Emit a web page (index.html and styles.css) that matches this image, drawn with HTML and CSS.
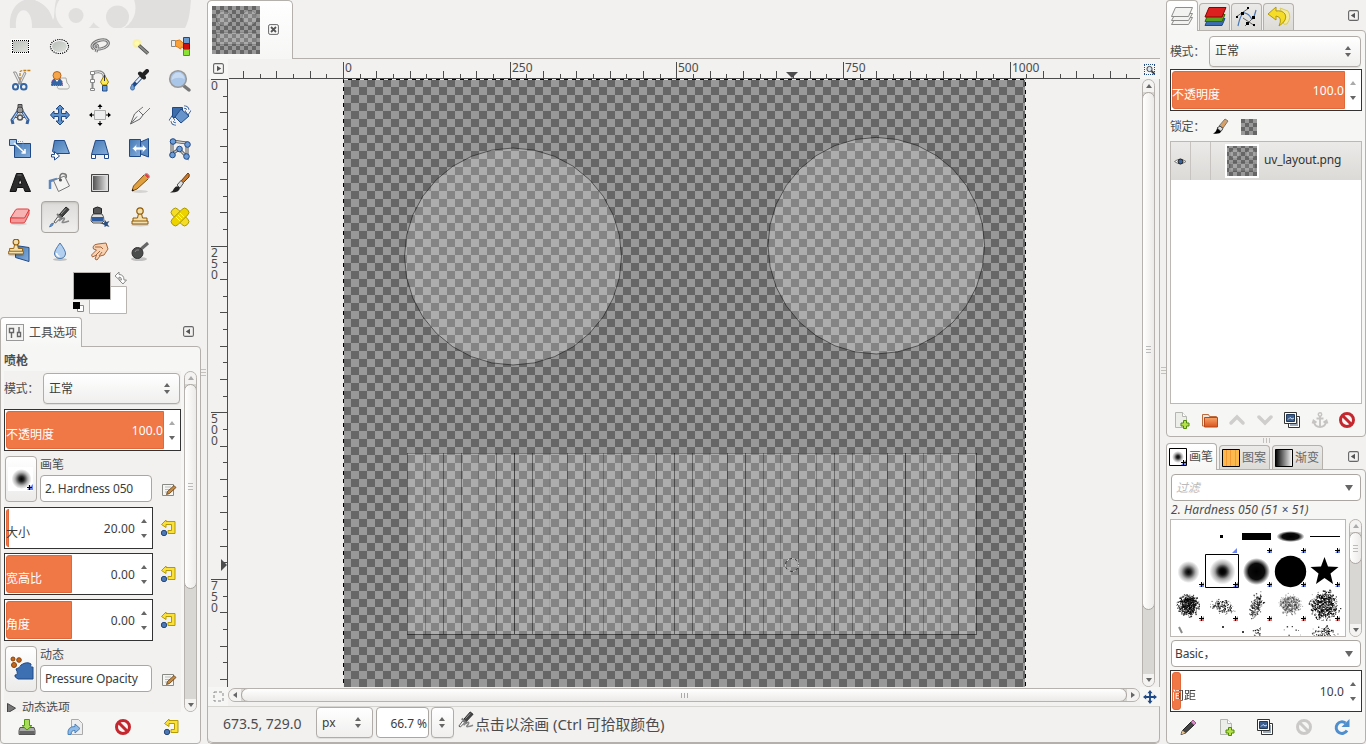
FILE: index.html
```
<!DOCTYPE html>
<html lang="zh-CN">
<head>
<meta charset="utf-8">
<title>GIMP</title>
<link rel="stylesheet" href="styles.css">
</head>
<body>
<svg class="defs" width="0" height="0">
<defs>
<pattern id="chk" x="343" y="79" width="16" height="16" patternUnits="userSpaceOnUse"><path fill="#666" d="M0 0h16v16H0z"/><path fill="#999" d="M0 0h8v8H0zM8 8h8v8H8z"/></pattern>
<pattern id="chk4" width="8" height="8" patternUnits="userSpaceOnUse"><path fill="#999" d="M0 0h8v8H0z"/><path fill="#666" d="M0 0h4v4H0zM4 4h4v4H4z"/></pattern>
<linearGradient id="gb" x1="0" y1="0" x2="1" y2="1"><stop offset="0" stop-color="#4478b4"/><stop offset="1" stop-color="#85aedb"/></linearGradient>
<linearGradient id="gg" x1="0" y1="0" x2="1" y2="1"><stop offset="0" stop-color="#b9beb7"/><stop offset="1" stop-color="#dfe1dd"/></linearGradient>
<linearGradient id="bw"><stop offset="0" stop-color="#444"/><stop offset="1" stop-color="#eee"/></linearGradient>
<linearGradient id="kw"><stop offset="0"/><stop offset="1" stop-color="#fff"/></linearGradient>
<linearGradient id="go" x1="0" y1="0" x2="0" y2="1"><stop offset="0" stop-color="#f7a46a"/><stop offset="1" stop-color="#d9531c"/></linearGradient>
<radialGradient id="soft"><stop offset="0"/><stop offset=".25" stop-opacity=".85"/><stop offset=".65" stop-opacity=".3"/><stop offset="1" stop-opacity="0"/></radialGradient>
<radialGradient id="mid"><stop offset="0"/><stop offset=".6" stop-opacity=".95"/><stop offset=".8" stop-opacity=".5"/><stop offset="1" stop-opacity="0"/></radialGradient>
<symbol id="reset" viewBox="0 0 18 18"><path d="M7 2.500h9v12h-7v-3h3.500v-6H7v3L2.500 5.500 7 1z" fill="#f9e03c" stroke="#b59a00"/><circle cx="5" cy="14" r="2.700" fill="#4b78b5" stroke="#27487a"/></symbol>
<symbol id="edit" viewBox="0 0 16 16"><path d="M1.500 2.500h11v11h-11z" fill="#f5f5f3" stroke="#888a85"/><path d="M4 5h6M4 7.500h5M4 10h3" stroke="#bbb"/><path d="M5.500 12.500l1-3 6.500-6 2 2-6.500 6z" fill="#c98a3c" stroke="#5a3b16" stroke-width=".8"/></symbol>
<symbol id="no" viewBox="0 0 18 18"><circle cx="9" cy="9" r="6.500" fill="none" stroke="currentColor" stroke-width="3"/><path d="M4.500 4.500l9 9" stroke="currentColor" stroke-width="3"/></symbol>
<symbol id="menu" viewBox="0 0 11 11"><rect x=".6" y=".6" width="9.800" height="9.800" rx="1.500" fill="none" stroke="#666" stroke-width="1.100"/><path d="M7 2.800v5.400L2.800 5.500z" fill="#555"/></symbol>
<symbol id="newdoc" viewBox="0 0 18 18"><path d="M2.500 1.500h7l4 4v11h-11z" fill="#eceeea" stroke="#b4b6b2"/><path d="M9.500 1.500v4h4" fill="#fff" stroke="#b4b6b2"/><path d="M10.500 9.500h3v2.500H16v3h-2.500v2.500h-3V15H8v-3h2.500z" fill="#b6e04c" stroke="#4e8a06"/></symbol>
<symbol id="dup" viewBox="0 0 18 18"><path d="M5.500 5.500h11v11h-11z" fill="#fff" stroke="#333"/><path d="M7 7h8v8H7z" fill="#9aa8b8"/><path d="M1.500 1.500h12v11h-12z" fill="#fff" stroke="#333"/><path d="M3.500 3.500h8v7h-8z" fill="#3b5f8f" stroke="#223a5a"/><path d="M5 8.500l2-2 2 1.500 2-1" stroke="#dce6f2" fill="none"/></symbol>
<symbol id="stamp" viewBox="0 0 24 24"><ellipse cx="12" cy="20" rx="9" ry="1.500" fill="#000" opacity=".15"/><path d="M10.500 8.500h3l1 4.500h4.500v3h1v3H4v-3h1v-3h4.500z" fill="#f3dfae" stroke="#8f5902"/><circle cx="12" cy="6" r="3.200" fill="#f3dfae" stroke="#8f5902" stroke-width="1.200"/><path d="M5 16h14" stroke="#8f5902"/></symbol>
<g id="airg"><path d="M11 16c5-5 7-3 4 0-3 3 3 1 6 0" fill="none" stroke="#888" stroke-width="1.600"/><path d="M6 17l4-5.500 2 2-4.500 4.500z" fill="#f2f2f2" stroke="#555"/><path d="M11 10l7-8 3 2.500-7.500 8z" fill="#444" stroke="#222"/><path d="M9 9l5.500 5" stroke="#777" stroke-width="2"/><path d="M13 9l5-5.500" stroke="#999"/></g>
</defs>
</svg>
<div class="app">
<aside class="left">
  <svg class="wilber" width="200" height="30"><path d="M10 28C8 6 23-4 35 0c11 4 15 10 18 20 2-5 1-12 3-20h135c-1 12-2 21-6 28z" fill="#e0dfde"/><path d="M16 28c-2-24 17-23 16 0zM35 0h19v19C49 8 43 3 35 0z" fill="#f2f1f0"/><circle cx="76" cy="12" r="20.500" fill="#f2f1f0"/><circle cx="76" cy="15.500" r="7.500" fill="#e0dfde"/><circle cx="112" cy="8" r="23.500" fill="#f2f1f0"/><circle cx="117.500" cy="17" r="11.500" fill="#e0dfde"/><path d="M0 28h200v3H0z" fill="#f2f1f0"/></svg>
  <div class="tools">
    <i><svg><path d="M3 4h19v15H3z" fill="#fff"/><path d="M5 6h15v11H5z" fill="url(#gg)"/><path d="M4 5.500h17M4 17.500h17M4.500 6v11M20.500 6v11" fill="none" stroke="#000" stroke-dasharray="1 1"/></svg></i>
    <i><svg><ellipse cx="11.500" cy="11.500" rx="9.500" ry="7.500" fill="#fff"/><ellipse cx="11.500" cy="11.500" rx="7.500" ry="5.500" fill="url(#gg)"/><ellipse cx="11.500" cy="11.500" rx="9" ry="7" fill="none" stroke="#000" stroke-width="1.200" stroke-dasharray="1.200 1"/></svg></i>
    <i><svg><path d="M6 14C1 11 6 6 13 5c7-1 9 3 6 6-3 3-10 4-12 2-2-2 0-4 2-3s0 4-1 7" fill="none" stroke="#777" stroke-width="3"/><path d="M6 14C1 11 6 6 13 5c7-1 9 3 6 6-3 3-10 4-12 2-2-2 0-4 2-3s0 4-1 7" fill="none" stroke="#ddd"/></svg></i>
    <i><svg><circle cx="9" cy="8.500" r="4.500" fill="#fff27a" opacity=".6"/><circle cx="9" cy="8.500" r="2.300" fill="#fffba8"/><path d="M11 10.500l9 8" stroke="#444" stroke-width="3.500"/><path d="M11 10.500l9 8" stroke="#8b8f87" stroke-width="1.800"/></svg></i>
    <i><svg><path d="M3.500 5.500h4v6h-4z" fill="#eee" stroke="#888"/><path d="M7.500 6l4-1 5 4v4l-3-1-1 2-3-2-2-1z" fill="#f9a13a" stroke="#e07a10"/><path d="M15.500 2.500h6v6h-6z" fill="#6a9bd0" stroke="#204a87"/><path d="M15.500 8.500h6v6h-6z" fill="#cc1010" stroke="#900"/><path d="M15.500 14.500h6v6h-6z" fill="#8ae234" stroke="#4e9a06"/></svg></i>

    <i><svg><path d="M12 11V3q0-1.500 3-1.500h8" fill="none" stroke="#c17d11" stroke-width="1.300" stroke-dasharray="3 1"/><path d="M5.500 3l6 12h2L8 3zM16.500 3l-6 12h2L18 4z" fill="#eee" stroke="#888" stroke-width=".9"/><rect x="5" y="15" width="5" height="5.500" rx="2.500" fill="none" stroke="#3465a4" stroke-width="2"/><rect x="13" y="15" width="5.500" height="5.500" rx="2.500" fill="none" stroke="#3465a4" stroke-width="2"/></svg></i>
    <i><svg><path d="M12 9h6l1 5c3 2 3 6 0 6h-7c-4 0-3-4 0-4z" fill="#f3f3f1" stroke="#aaa"/><path d="M3.500 16.500c0-7 2-6 5-7 4 0 6 1 6 7z" fill="#3465a4" stroke="#8c2a7b" stroke-dasharray="1 1"/><path d="M7 10l2 3 2-3" fill="#fff"/><circle cx="9" cy="6.500" r="4" fill="#f5a54a" stroke="#b9661a"/></svg></i>
    <i><svg><path d="M5 3.500Q18 0 16 12" stroke="#888" stroke-width="3" fill="none"/><path d="M5 3.500Q18 0 16 12" stroke="#eee" fill="none"/><path d="M4.500 4v17" stroke="#888" stroke-width="2"/><path d="M2.500 2.500h4v3h-4zM2.500 10.500h4v3h-4zM2.500 19.500h4v2h-4z" fill="#fff" stroke="#888"/><path d="M16.500 6l4 7-2 3h-4l-2-3z" fill="#fce94f" stroke="#a08000"/><path d="M16.500 6v6" stroke="#333"/><path d="M14.500 16.500h4.500v5.500h-4.500z" fill="#6b9bd0" stroke="#204a87"/></svg></i>
    <i><svg><path d="M5 17L15 6" stroke="#204a87" stroke-width="4"/><path d="M8 13.500L15 6" stroke="#e9eef5" stroke-width="2.400"/><path d="M12 4.500l4 4M14 7l5-5" stroke="#222" stroke-width="4" stroke-linecap="round"/><path d="M4.500 15c3 4 2 6 0 6s-3-2 0-6z" fill="#729fcf" stroke="#3465a4"/></svg></i>
    <i><svg><path d="M16 17l5 4" stroke="#777" stroke-width="3.500" stroke-linecap="round"/><circle cx="10" cy="10" r="8.300" fill="#a9c6e8" stroke="#999" stroke-width="1.600"/><path d="M3.500 11q6-4 13-1-1-6-6-6.500-6 0-7 7.500z" fill="#c8daf0"/></svg></i>

    <i><svg><path d="M10 8L4 17l1 4M14 8l6 9-1 4" fill="none" stroke="#37629b" stroke-width="3"/><path d="M9 9.500L4.500 17M15 9.500l4.500 7.500" stroke="#c7d6e8"/><path d="M10 1.500h4V5h-4z" fill="#888" stroke="#444"/><circle cx="12" cy="7" r="3" fill="#999" stroke="#444"/><circle cx="12" cy="14.500" r="2.500" fill="#eee" stroke="#555" stroke-width="1.500"/><path d="M7 14.500h2m6 0h2" stroke="#555"/></svg></i>
    <i><svg><path d="M12 2l4 4h-2.500v4.500H18V8l3.500 4L18 16v-2.500h-4.500V18H16l-4 4-4-4h2.500v-4.500H6V16L2.500 12 6 8v2.500h4.500V6H8z" fill="#5e92cc" stroke="#204a87"/></svg></i>
    <i><svg><path d="M6.500 7.500h11v9h-11z" fill="#eee" stroke="#aaa"/><path d="M12 1l2.500 3h-5zM12 23l2.500-3h-5zM1 12l3-2.500v5zM23 12l-3-2.500v5z"/><path d="M12 3v3M12 18v3M3 12h3M18 12h3" stroke="#000"/></svg></i>
    <i><svg><path d="M2.500 21L6.500 11l4-3.500 4.500 4.500-3 4z" fill="#f4f4f4" stroke="#666"/><path d="M10.500 7.500L15 4M15 12l7-7" stroke="#777"/><path d="M3 20.500l6-7" stroke="#666"/></svg></i>
    <i><svg><path d="M4.500 4.500h10v10h-10z" fill="#3c6ca9" stroke="#204a87"/><path d="M13 6l8 7-8 7-6-6z" fill="#6795cb" stroke="#204a87"/><path d="M16 4q4 0 4 4m-2-1l2 3 2-3M8 21q-4 0-4-4m-2 1l2-3 2 3" fill="none" stroke="#204a87" stroke-width="3"/><path d="M16 4q4 0 4 4m-2-1l2 3 2-3M8 21q-4 0-4-4m-2 1l2-3 2 3" fill="none" stroke="#fff" stroke-width="1.500"/></svg></i>

    <i><svg><path d="M6.500 6.500h16v14h-16z" fill="url(#gb)" stroke="#204a87"/><path d="M2 4.500h13v13" fill="none" stroke="#7fa6d8" stroke-dasharray="1 1"/><path d="M1.500 2.500h7v6h-7z" fill="#9fc0e6" stroke="#204a87"/><path d="M6 6l11 10m-3.500 0H17v-4" stroke="#fff" stroke-width="1.600" fill="none"/></svg></i>
    <i><svg><path d="M6.500 3.500h10l5 13h-14l-3-2z" fill="url(#gb)" stroke="#204a87"/><path d="M3.500 17.500h3v-3l5 4.500-5 4v-3h-3z" fill="#fff" stroke="#204a87"/></svg></i>
    <i><svg><path d="M7.500 3.500h9l4 14H3.500z" fill="url(#gb)" stroke="#204a87"/><path d="M3.500 17.500h4v4h-4zM16.500 17.500h4v4h-4z" fill="#fff" stroke="#204a87"/></svg></i>
    <i><svg><path d="M1.500 2.500h11v17h-11z" fill="url(#gb)" stroke="#204a87"/><path d="M12.500 5l8-3.500v18.500l-8-3z" fill="#5c8cc4" stroke="#204a87"/><path d="M4.500 11.500l4-4v2.500h6V7.500l4 4-4 4v-2.500h-6v2.500z" fill="#fff" stroke="#7fa6d8" stroke-width=".7"/></svg></i>
    <i><svg><path d="M4 4l15 2v14l-8-8-7 5z" fill="none" stroke="#555" stroke-width="3"/><path d="M4 4l15 2v14l-8-8-7 5z" fill="none" stroke="#ccc" stroke-width="1.300"/><g fill="#6d9dd6" stroke="#204a87"><circle cx="5" cy="4.500" r="2.800"/><circle cx="19.500" cy="7.500" r="2.800"/><circle cx="11.500" cy="12" r="2.800"/><circle cx="4.500" cy="18" r="2.800"/><circle cx="18.500" cy="19.500" r="2.800"/></g></svg></i>

    <i><svg><path d="M8.500 2.500h6l8 18h-5.500l-1.500-4H9L8 20.500H2zM10.500 13H14l-2-5.500z" fill="#2c2c2c" stroke="#111" fill-rule="evenodd"/><path d="M9.500 4h4" stroke="#777"/></svg></i>
    <i><svg><path d="M2 18V10l7-2" fill="none" stroke="#5d87bc" stroke-width="2.500"/><path d="M5.500 9.500l11-4.500L21.500 15 10.500 20.500z" fill="#f4f4f3" stroke="#777"/><path d="M12 10V5q1-3.500 5-2 2 1 1 4" fill="none" stroke="#777" stroke-width="1.500"/><circle cx="12.500" cy="9" r="1.500" fill="#555"/></svg></i>
    <i><svg><path d="M3.500 3.500h17v17h-17z" fill="url(#bw)" stroke="#444"/><path d="M4.500 4.500h15v15h-15z" fill="none" stroke="#ddd"/></svg></i>
    <i><svg><ellipse cx="12" cy="20.500" rx="8" ry="1.500" fill="#000" opacity=".12"/><path d="M4 20l1.500-5L16 4l4 4L9 18z" fill="#e0a040" stroke="#7a4d0a"/><path d="M16 4q2-3 4.500-.5T20 8z" fill="#e04545" stroke="#aaa"/><path d="M4 20l2-.5-1.500-1.500z"/></svg></i>
    <i><svg><path d="M13 10L20 2q2 1 1 4l-6 6z" fill="#c4792f" stroke="#6b3a0b"/><path d="M9 14l4-4.500 2.500 2.500-3.500 5z" fill="#ddd" stroke="#555"/><path d="M2 21.500q3-1 4-4 3-4 6-.5-1 5-10 4.500z" fill="#222"/></svg></i>

    <i><svg><ellipse cx="11" cy="19" rx="8" ry="1.500" fill="#000" opacity=".1"/><path d="M2.500 13l5-8q.5-1 2-1h10q2 0 1.500 1.500l-4 8z" fill="#f7b2b2" stroke="#e03c3c"/><path d="M2.500 13h14l4.500-8v4l-4 8q-.5 1-2 1H3.500q-1 0-1-1z" fill="#f29a9a" stroke="#e03c3c"/></svg></i>
    <i class="on"><svg><use href="#airg"/><path d="M1.500 22q1-4 4-4 0 3-4 4z" fill="#729fcf" stroke="#3465a4" stroke-width=".7"/></svg></i>
    <i><svg><path d="M5.500 3.500q4-3 8 0v5h-8z" fill="#555" stroke="#222"/><path d="M5 9h9q2 2 2 7l-2 2H5l-2-2q0-5 2-7z" fill="#ddd" stroke="#555"/><path d="M4 12h11v4.500H4z" fill="#2d5b9e"/><path d="M12 18h4l1-3 1.500 2 3-1-2 3 2 3-3-1-2 1v-2z" fill="#2c4e7d"/></svg></i>
    <i><svg><use href="#stamp"/></svg></i>
    <i><svg><g stroke="#a59400" stroke-width=".9"><rect x="1.500" y="8" width="21" height="8" rx="3.500" transform="rotate(45 12 12)" fill="#f4dc28"/><rect x="1.500" y="8" width="21" height="8" rx="3.500" transform="rotate(-45 12 12)" fill="#edd400"/></g><path d="M8 12l4 4m-2-6l4 4m-2-6l4 4" stroke="#fff59a"/></svg></i>

    <i><svg><path d="M7.500 6.500l13.500 2v14l-13.500-4z" fill="url(#gb)" stroke="#204a87"/><g transform="translate(-3 -2.500) scale(.92)"><use href="#stamp" width="24" height="24"/></g></svg></i>
    <i><svg><ellipse cx="12" cy="20.500" rx="7" ry="1.500" fill="#000" opacity=".2"/><path d="M12 4q6 8 5.500 11-1 4.500-5.500 4.500T6.500 15Q6 12 12 4z" fill="#b3cff0" stroke="#4a78ad"/><path d="M8.500 14q0 3 3 3.500" stroke="#fff" fill="none" stroke-width="1.500"/></svg></i>
    <i><svg><path d="M5 8q1-3 5-3l8-1 2 6-4 6-4 1-3 4-2-1 1.500-4-4 2-1-2 5-5-3-1z" fill="#f6d2b3" stroke="#a8653a"/><path d="M12 12l-4 4m6-3l-3 4m-4-9h6l2 2" stroke="#a8653a" fill="none"/></svg></i>
    <i><svg><ellipse cx="11" cy="20" rx="8" ry="2" fill="#000" opacity=".2"/><path d="M12 11l8-7" stroke="#666" stroke-width="3"/><circle cx="9.500" cy="14" r="5.500" fill="#4a4d4b" stroke="#333"/><path d="M7 13q1-3 4-2" stroke="#888" fill="none"/></svg></i>
  </div>
  <div class="colors"><svg width="60" height="46"><path d="M16.500 14.500h37v27h-37z" fill="#fff" stroke="#b8b5b0"/><path d="M.5.500h37v27H.5z" stroke="#b8b5b0"/><path d="M4.500 33.500h6v6h-6z" fill="#fff" stroke="#888"/><path d="M0 30h7v7H0z"/><path d="M42 4l4-4v2.500q5 0 5 5.500h2.500L50 12l-4-4h2.500q0-3-2.500-3v2.500z" fill="#fff" stroke="#8a8a88"/></svg></div>
  <div class="lowdock">
    <div class="ltabs"><div class="tab cur"><svg width="18" height="18"><rect x=".5" y=".5" width="17" height="16" fill="#f4f4f3" stroke="#999"/><path d="M3.500 4.500h4v4h-4zM5.500 9v5M11.500 8.500h3v4h-3zM13 3v5" fill="#fff" stroke="#666" stroke-width="1.400"/></svg><span>工具选项</span></div><svg class="mn" width="11" height="11"><use href="#menu"/></svg></div>
    <div class="lbody">
      <b class="ttl">喷枪</b>
      <div class="lscroll">
        <div class="opts">
          <div class="mode"><span>模式：</span><div class="combo">正常<em class="ud"></em></div></div>
          <div class="scale full"><div class="fill f158"></div><span class="w">不透明度</span><strong class="w">100.0</strong><em class="ud half"></em></div>
          <div class="pick"><div class="pbtn"><svg width="28" height="30"><path fill="#fff" d="M1 3h25v24H1z"/><circle cx="14.500" cy="15" r="10" fill="url(#soft)"/><path d="M26 20v6h-6z" fill="#6d86f5"/><path d="M20 23.500h5M22.500 21v5" stroke="#000" stroke-width="1.200"/></svg></div><div class="pr"><span>画笔</span><div class="entry">2. Hardness 050</div></div><svg class="ed"><use href="#edit"/></svg></div>
          <div class="rowr g1"><div class="scale"><div class="fill f3"></div><span>大小</span><strong>20.00</strong><em class="ud"></em></div><svg class="rs"><use href="#reset"/></svg></div>
          <div class="rowr"><div class="scale"><div class="fill f66"></div><span class="w">宽高比</span><strong>0.00</strong><em class="ud"></em></div><svg class="rs"><use href="#reset"/></svg></div>
          <div class="rowr"><div class="scale"><div class="fill f66"></div><span class="w">角度</span><strong>0.00</strong><em class="ud"></em></div><svg class="rs"><use href="#reset"/></svg></div>
          <div class="pick p2"><div class="pbtn"><svg width="28" height="30"><path d="M9 15q4-1 5-4 6-4 10-1-1 4 2 3v12H11q-4-2-3-4 4 0 1-6z" fill="#3d6fb3" stroke="#204a87"/><g fill="#c4671a" stroke="#8a430a"><circle cx="6" cy="5" r="2"/><circle cx="12" cy="6" r="2.300"/><circle cx="7" cy="11" r="2.500"/></g></svg></div><div class="pr"><span>动态</span><div class="entry">Pressure Opacity</div></div><svg class="ed"><use href="#edit"/></svg></div>
          <div class="exp"><svg width="9" height="11"><path d="M.5.500v9.500l8-4.800z" fill="#777" stroke="#444"/></svg>动态选项</div>
        </div>
        <div class="sb v lv"><u class="up dis"></u><div class="thumb"><s></s></div><u class="dn"></u></div>
      </div>
      <div class="btns four">
        <svg width="18" height="18"><path d="M2 9.500h14l1 3v4H1v-4z" fill="#aaa" stroke="#555"/><path d="M1.500 13h15v3h-15z" fill="#666"/><path d="M6.500 1.500h5v6H14L9 12 4 7.500h2.500z" fill="#a8dc5a" stroke="#4e9a06"/></svg>
        <svg width="18" height="18"><path d="M5.500 1.500h7l4 4v11h-11z" fill="#eee" stroke="#aaa"/><path d="M2 16.500q-1-8 7-8V6l5 4.500-5 4.500v-2.500q-4-.5-4 4z" fill="#8fbbe6" stroke="#4b82bd"/></svg>
        <svg width="18" height="18" class="red"><use href="#no"/></svg>
        <svg width="18" height="18"><use href="#reset"/></svg>
      </div>
    </div>
  </div>
</aside>
<div class="grip gl"><svg width="5" height="8"><path d="M0 1.500h5M0 4.500h5M0 7.500h5" stroke="#c4c1bd"/></svg></div>
<main class="center">
  <div class="ctabs"><div class="ctab"><svg width="48" height="48"><path fill="url(#chk4)" d="M0 0h48v48H0z"/><g fill="#fff" fill-opacity=".18" stroke="#222" stroke-opacity=".2"><circle cx="12" cy="12.500" r="7.500"/><circle cx="37.500" cy="12" r="7.500"/><path d="M4.500 26.500h40v12h-40z"/></g></svg><svg width="11" height="11"><rect x=".6" y=".6" width="9.800" height="9.800" rx="1.500" fill="none" stroke="#666"/><path d="M3 3l5 5m0-5l-5 5" stroke="#555" stroke-width="1.800"/></svg></div><div class="rest"></div></div>
  <div class="view">
    <div class="cn"><svg width="11" height="11"><g transform="rotate(180 5.500 5.500)"><use href="#menu" width="11" height="11"/></g></svg></div>
    <svg id="hr" width="912" height="20" viewBox="228 59 912 20"></svg>
    <div class="cn"><svg width="14" height="13"><path d="M1 1.500h11M1 11.500h11M1.500 2v9M11.500 2v9" fill="none" stroke="#204a87" stroke-dasharray="1 1"/><circle cx="6.500" cy="6" r="2.600" fill="#dfe8f2" stroke="#444"/><path d="M8.500 8l3 3" stroke="#444" stroke-width="2"/></svg></div>
    <svg id="vr" width="20" height="608" viewBox="208 79 20 608"></svg>
    <svg id="cv" width="912" height="608" viewBox="228 79 912 608"></svg>
    <div class="sb v cvs"><u class="up"></u><div class="thumb"><s></s></div><u class="dn"></u></div>
    <div class="cn"><svg width="11" height="11"><rect x="1" y="1" width="9" height="9" fill="none" stroke="#888" stroke-dasharray="3 2"/></svg></div>
    <div class="sb h"><u class="lf"></u><div class="thumb"><s></s></div><u class="rt"></u></div>
    <div class="cn"><svg width="14" height="14" viewBox="1 1 22 22"><path d="M12 1l4 5h-2.500v4.500H18V8l5 4-5 4v-2.500h-4.500V18H16l-4 5-4-5h2.500v-4.500H6V16L1 12 6 8v2.500h4.500V6H8z" fill="#204a87"/></svg></div>
  </div>
  <div class="status"><span class="pos">673.5, 729.0</span><div class="combo px">px<em class="ud"></em></div><div class="entry zm">66.7 %</div><div class="combo sp"><em class="ud"></em></div><svg class="si" width="17" height="17" viewBox="4 1 18 18"><use href="#airg"/></svg><span class="msg">点击以涂画 (Ctrl 可拾取颜色)</span></div>
</main>
<div class="grip gr"><svg width="5" height="8"><path d="M0 1.500h5M0 4.500h5M0 7.500h5" stroke="#c4c1bd"/></svg></div>
<aside class="right">
  <div class="dock d1">
    <div class="rtabs"><div class="tab cur a"><svg width="24" height="24"><g fill="#f2f2f1" stroke="#8c8c8a"><path d="M5.500 13.500h17l-4 7h-17z"/><path d="M5.500 9.500h17l-4 7h-17z"/><path d="M5.500 3.500h17l-4 9h-17z"/></g></svg></div><div class="tab b"><svg width="24" height="24"><path d="M5 13.500h17l-3 7H2z" fill="#3c6cb0" stroke="#204a87"/><path d="M5 9.500h17l-3 7H2z" fill="#5da021" stroke="#2e6a04"/><path d="M6 2.500h17l-4 9.500H2z" fill="#dc1f1f" stroke="#8c0000"/></svg></div><div class="tab b"><svg width="24" height="24"><path d="M3 21Q6 7 10 8t6 5 5-8" fill="none" stroke="#4878b8" stroke-width="1.200"/><path d="M1 12l13-9M8 13l12 8M10 21l9-9" stroke="#666"/><path d="M6 7h3v3H6zM17 11h3v3h-3zM11 17h3v3h-3zM12 2h2v2h-2zM1 11h2v2H1zM18 19h2v2h-2z"/></svg></div><div class="tab b"><svg width="26" height="24"><path d="M14 3l8 3q4 6-1 13-4 1-4-1 4-5 0-7z" fill="#f4ea9a" stroke="#d8cc60"/><path d="M10 2L2 9l8 6v-4q7 1 3 10 9-6 6-12-3-4-9-3z" fill="#f4dc28" stroke="#b59a00"/></svg></div><svg class="mn" width="11" height="11"><use href="#menu"/></svg></div>
    <div class="rb1">
      <div class="mode"><span>模式：</span><div class="combo">正常<em class="ud"></em></div></div>
      <div class="scale"><div class="fill f173"></div><span class="w">不透明度</span><strong class="w">100.0</strong><em class="ud half"></em></div>
      <div class="lock"><span>锁定：</span><svg width="17" height="17"><path d="M7 8l6-7 3 2-5 7z" fill="#d9a066" stroke="#777"/><path d="M5 10l3-2 3 2.500-2 3z" fill="#ddd" stroke="#444"/><path d="M1 15.500q3-1 4-5l4 3q-1 3-8 2z"/></svg><svg width="16" height="16"><path fill="url(#chk4)" d="M0 0h16v16H0z"/></svg></div>
      <div class="layers"><div class="layer"><div class="eye"><svg width="13" height="9"><path d="M.5 4.500Q6 0 12 4.500 6 9 .5 4.500z" fill="#fff" stroke="#777"/><circle cx="6.500" cy="4.500" r="2.500" fill="#37629b" stroke="#222"/></svg></div><div class="lk"></div><svg class="th" width="34" height="34"><path fill="url(#chk4)" d="M0 0h34v34H0z"/><path fill="none" stroke="#fff" stroke-width="2" d="M1 1h32v32H1z"/><g fill="#fff" fill-opacity=".12" stroke="#222" stroke-opacity=".15"><circle cx="10" cy="10" r="5"/><circle cx="26" cy="10" r="5"/><path d="M5 19h25v8H5z"/></g></svg><span>uv_layout.png</span></div></div>
      <div class="btns seven">
        <svg width="18" height="18"><use href="#newdoc"/></svg>
        <svg width="18" height="18"><path d="M1.500 15V3.500h6l1 2h7V15z" fill="#e9e9e7" stroke="#bc6b3f"/><path d="M3.500 6.500h13v9.500h-13z" fill="url(#go)" stroke="#b8491a"/></svg>
        <svg width="18" height="18"><path d="M3 12l6-6 6 6" fill="none" stroke="#d0cecc" stroke-width="3.500" stroke-linecap="round"/></svg>
        <svg width="18" height="18"><path d="M3 6l6 6 6-6" fill="none" stroke="#d0cecc" stroke-width="3.500" stroke-linecap="round"/></svg>
        <svg width="18" height="18"><use href="#dup"/></svg>
        <svg width="18" height="18"><path d="M9 5v11M5.500 7.500h7M3 11q1 5 6 5t6-5M1.500 12.500l1-3 3 2m11 1l-1-3-3 2" fill="none" stroke="#c6c4c2" stroke-width="1.800"/><circle cx="9" cy="3.500" r="1.700" fill="none" stroke="#c6c4c2" stroke-width="1.500"/></svg>
        <svg width="18" height="18" class="red"><use href="#no"/></svg>
      </div>
    </div>
  </div>
  <div class="gh"><svg width="8" height="5"><path d="M1.500 0v5M4.500 0v5M7.500 0v5" stroke="#c4c1bd"/></svg></div>
  <div class="dock d2">
    <div class="btabs"><div class="tab cur"><svg width="18" height="18"><path d="M.5.500h17v17H.5z" fill="#fff" stroke="#000"/><circle cx="9" cy="9" r="6" fill="url(#soft)"/><path d="M17 12v5h-5z" fill="#6d86f5"/><path d="M12 14.500h5M14.500 12v5" stroke="#000"/></svg><span>画笔</span></div><div class="tab"><svg width="18" height="18"><path d="M.5.500h17v17H.5z" fill="#fcb94d" stroke="#000"/><path d="M4.500 1v16M8.500 1v16M13.500 1v16" stroke="#f08c2c" stroke-opacity=".7"/></svg><span>图案</span></div><div class="tab"><svg width="18" height="18"><path d="M.5.500h17v17H.5z" fill="url(#kw)" stroke="#000"/></svg><span>渐变</span></div><svg class="mn" width="11" height="11"><use href="#menu"/></svg></div>
    <div class="rb2">
      <div class="entry flt"><span>过滤</span><em class="dd"></em></div>
      <div class="info">2. Hardness 050 (51 × 51)</div>
      <div class="bgrid"><svg id="br" width="176" height="118" viewBox="1170 519 176 118"></svg><div class="sb v bs"><u class="up dis"></u><div class="thumb"><s></s></div><u class="dn"></u></div></div>
      <div class="entry bas"><span>Basic，</span><em class="dd"></em></div>
      <div class="scale spc"><div class="fill f9"></div><span class="two">间距</span><strong>10.0</strong><em class="ud"></em></div>
      <div class="btns five">
        <svg width="18" height="18"><path d="M2 16.500l1.500-4L12 4l3 3-8.500 8z" fill="#444" stroke="#222"/><path d="M12 4l2-2 3 3-2 2z" fill="#d58bc4" stroke="#a0568e"/><path d="M2 16.500l1.500-4 3 2.500z" fill="#e9c48e"/></svg>
        <svg width="18" height="18"><use href="#newdoc"/></svg>
        <svg width="18" height="18"><use href="#dup"/></svg>
        <svg width="18" height="18" class="gry"><use href="#no"/></svg>
        <svg width="18" height="18"><path d="M14 12.500A5.800 5.800 0 1 1 12.500 5" fill="none" stroke="#4f8fce" stroke-width="3"/><path d="M16.500 1v8h-8z" fill="#4f8fce"/></svg>
      </div>
    </div>
  </div>
</aside>
</div>
<script src="app.js"></script>
</body>
</html>
```
FILE: styles.css
```
*{box-sizing:border-box}
body{margin:0;background:#f2f1f0;font:12px/16px "Noto Sans","Noto Sans CJK SC",sans-serif;color:#4c4c4c;overflow:hidden}
svg{display:block;flex:none}
.defs{position:absolute}
i,em,u,s{font-style:normal;text-decoration:none}
.app{display:flex;width:1366px;height:744px}
.left{width:201px;height:744px;flex:none;display:flex;flex-direction:column}
.wilber{flex:none}
.tools{display:grid;grid-template-columns:repeat(5,40px);grid-auto-rows:34px;height:242px;flex:none}
.tools i{display:flex;align-items:center;justify-content:center}
.tools svg{width:24px;height:24px}
.tools .on{border:1px solid #a9a6a2;border-radius:4px;background:linear-gradient(#dcdbd9,#f0efee);width:38px;height:32px;margin:1px 0 0 1px;box-shadow:inset 0 1px 2px #c4c2bf}
.colors{height:45px;padding-left:73px;flex:none}
.lowdock{flex:1;display:flex;flex-direction:column}
.ltabs{height:29px;display:flex;justify-content:space-between;position:relative;z-index:1}
.tab{border:1px solid #b4b0ab;border-bottom:0;border-radius:4px 4px 0 0;display:flex;align-items:center;background:linear-gradient(#eceae8,#dddbd8)}
.tab.cur{background:linear-gradient(#fff,#f6f6f5)}
.ltabs .tab{width:82px;height:30px;padding-left:5px;gap:5px}
.mn{margin:9px 7px 0 0}
.lbody{flex:1;border:1px solid #b4b0ab;border-radius:0 4px 4px 4px;background:#f6f6f5;padding:0 2px 0 3px;height:398px;display:flex;flex-direction:column}
.ttl{height:24px;line-height:27px;flex:none}
.lscroll{height:341px;display:flex;gap:3px;flex:none}
.opts{width:177px;padding-top:1px;overflow:hidden;background:#f2f1f0;display:flex;flex-direction:column;flex:none}
.mode{display:flex;align-items:center;height:33px;flex:none}
.mode span{width:39px;letter-spacing:-.4px;white-space:nowrap}
.combo{flex:1;height:31px;border:1px solid #b0aca7;border-radius:4px;background:linear-gradient(#fff,#f0efee);display:flex;align-items:center;padding-left:5px;justify-content:space-between;color:#3c3c3c;box-shadow:0 1px 0 #e2e0de}
.opts .combo{margin-right:1px}
.ud{width:7px;flex:none;position:relative}
.ud:before,.ud:after{content:"";position:absolute;left:0;border:3.500px solid #0000}
.ud:before{top:-2px;border-bottom:4px solid #666}
.ud:after{bottom:-2px;border-top:4px solid #666}
.combo .ud{margin-right:8px;height:13px}
.scale{position:relative;border:1px solid #333;background:#fff;height:42px;display:flex;align-items:center;color:#3c3c3c}
.full{margin-top:4px;flex:none}
.fill{position:absolute;left:1px;top:1px;bottom:1px;background:#f07746;border:1px solid #e0683a;border-radius:3px 0 0 3px}
.f158{width:158px}.f3{width:3px}.f66{width:66px}.f173{width:173px}.f9{width:9px;border-radius:3px}
.scale span,.scale strong{position:relative;font-weight:400}
.scale span{padding:10px 0 0 1px;flex:1}
.scale strong{margin:1px 1px 0 0;letter-spacing:.1px}
.scale .w{color:#fff}
.scale .ud{margin:2px 4px 0 5px;height:23px}
.scale .ud:after{bottom:0}
.scale .half:before{border-bottom-color:#aaa}
.pick{height:46px;margin-top:5px;display:flex;flex:none}
.pbtn{width:32px;height:46px;margin-left:1px;border:1px solid #b0aca7;border-radius:4px;background:linear-gradient(#fff,#ecebea);display:flex;align-items:center;padding-left:1px}
.pr{width:111px;margin-left:4px}
.pr span{display:block;height:19px;line-height:18px;margin-left:-1px}
.pr .entry{margin-left:-1px;width:112px}
.entry{border:1px solid #aaa6a1;border-radius:4px;background:#fff;height:27px;color:#3c3c3c;display:flex;align-items:center;padding-left:4px;letter-spacing:-.15px;white-space:nowrap}
.ed{width:16px;height:16px;margin:26px 0 0 9px}
.rowr{display:flex;align-items:center;height:42px;margin-bottom:4px;flex:none}
.g1{margin-top:5px}
.rowr .scale{width:149px}
.rs{width:18px;height:18px;margin-left:6px}
.p2{margin-top:1px}
.exp{display:flex;align-items:center;gap:6px;padding:8px 0 0 3px;flex:none}
.sb{border:1px solid #b6b2ad;background:#d9d7d4;border-radius:7px;display:flex;flex:none;overflow:hidden}
.sb.v{width:13px;flex-direction:column}
.sb u{flex:none;background:#f4f3f2;display:flex;align-items:center;justify-content:center}
.sb.v u{height:12px}
.sb.h u{width:12px}
.sb u:before{content:"";border:3px solid #0000}
.sb .up:before{border-bottom:4px solid #666;margin-top:-3px}
.sb .dn:before{border-top:4px solid #666;margin-top:3px}
.sb .lf:before{border-right:4px solid #666;margin-left:-3px}
.sb .rt:before{border-left:4px solid #666;margin-left:3px}
.sb .dis:before{border-bottom-color:#aaa}
.thumb{border:1px solid #aaa6a1;border-radius:7px;background:linear-gradient(90deg,#fff,#eceae8);display:flex;align-items:center;justify-content:center;margin:0 -1px}
.h .thumb{background:linear-gradient(#fff,#eceae8)}
.thumb s{width:5px;height:7px;background:repeating-linear-gradient(#bbb 0 1px,#0000 1px 3px)}
.h .thumb s{width:7px;height:5px;background:repeating-linear-gradient(90deg,#aaa 0 1px,#0000 1px 3px)}
.lv .thumb{height:205px;margin-bottom:110px}
.btns{display:flex;align-items:center}
.four{padding:0 0 0 14px;gap:30px;height:30px}
.red{color:#c4282e}.gry{color:#cbc9c7}
.grip{width:6px;padding:368px 0 0 0;flex:none}
.center{width:953px;height:744px;flex:none;display:flex;flex-direction:column;border:1px solid #b4b0ab;border-radius:5px 0 5px 5px;border-top:0;border-right:0}
.ctabs{display:flex;height:59px}
.ctab{width:86px;height:59px;margin-left:-1px;border:1px solid #b4b0ab;border-bottom:0;border-radius:5px 5px 0 0;background:linear-gradient(#fff,#f6f6f5);display:flex;align-items:center;padding:0 0 0 4px;gap:8px}
.ctab svg+svg{margin-top:-2px}
.rest{flex:1;border-bottom:1px solid #b4b0ab}
.view{display:grid;grid-template-columns:20px 912px 20px;grid-template-rows:20px 608px 19px;border-right:1px solid #b4b0ab;height:648px;border-bottom:1px solid #d6d4d1}
.cn{display:flex;align-items:center;justify-content:center;background:#f6f6f5}
.cn:first-child{padding-bottom:1px}
.cvs{margin:0 0 0 2px;height:608px}
.cvs .thumb{height:518px;margin-bottom:64px}
.cvs s{margin-top:-3px}
.sb.h{height:14px;margin-top:1px}
.h .thumb{width:886px;margin:-1px 0}
.status{flex:1;display:flex;align-items:center;border-right:1px solid #b4b0ab;border-bottom:1px solid #b4b0ab;border-radius:0 0 5px 5px;padding:0 0 4px 15px}
.pos{width:93px;font-size:14px;letter-spacing:-.05px;padding-top:2px}
.px{flex:none;width:57px}
.combo.px .ud{margin-right:10px}
.zm{width:53px;height:31px;margin-left:3px;padding:2px 1px 0 0;justify-content:flex-end;letter-spacing:-.05px}
.sp{flex:none;width:23px;margin:0 3px 0 2px}
.combo.sp{padding:0;justify-content:center}
.combo.sp .ud{margin:0}
.si{margin-top:-6px}
.msg{font-size:14.900px;margin:2px 0 0 1px;white-space:nowrap;letter-spacing:-.05px}
.gr{padding:366px 0 0 1px}
.right{width:200px;flex:none;height:744px;display:flex;flex-direction:column}
.rtabs{display:flex;height:30px;align-items:flex-end;gap:1px;position:relative;z-index:1}
.rtabs .tab{width:31px;height:27px;justify-content:center}
.rtabs .a{width:32px;height:31px;margin-bottom:-1px}
.rtabs .b svg{margin-top:-1px}
.rtabs .mn{margin:0 7px 9px auto}
.rb1{height:407px;border:1px solid #b4b0ab;border-radius:0 4px 4px 4px;background:#f6f6f5;padding:4px 3px 0 3px}
.rb1 .mode{height:32px}
.rb1 .mode .combo{margin-right:1px}
.rb1 .mode span{padding-top:1px}
.rb1 .scale{margin-top:2px}
.lock{display:flex;align-items:center;height:31px}
.lock span{width:42px;letter-spacing:-.4px}
.lock svg+svg{margin-left:12px}
.layers{height:263px;border:1px solid #bcb9b5;background:#fff;margin-top:-1px}
.layer{height:38px;display:flex;align-items:center;background:linear-gradient(#ebeae8,#dcdad7);color:#333}
.eye,.lk{width:20px;height:38px;border-right:1px solid #c6c3c0;display:flex;align-items:center;justify-content:center}
.th{margin:0 5px 0 14px}
.layer span{letter-spacing:-.15px;margin-top:-2px}
.seven{gap:9.500px;padding-left:3px;height:31px}
.gh{height:6px;padding:1px 0 0 96px}
.btabs{display:flex;height:26px;align-items:flex-end;gap:2px;position:relative;z-index:1;color:#666}
.btabs .tab{width:51px;height:24px;padding-left:2px;gap:2px}
.btabs .cur{height:27px;margin-bottom:-1px;color:#4c4c4c}
.btabs .mn{margin:0 7px 7px auto}
.rb2{height:275px;border:1px solid #b4b0ab;border-radius:0 4px 4px 4px;background:#f6f6f5;padding:4px 3px 0}
.flt,.bas{margin:0 1px;justify-content:space-between}
.flt span{color:#bbb;font-style:italic}
.dd{border:4px solid #0000;border-top:6px solid #666;margin:5px 7px 0 0}
.info{font-style:italic;height:18px;line-height:18px;letter-spacing:.1px;padding-left:1px}
.bgrid{display:flex;gap:3px;height:118px}
#br{background:#fff;outline:1px solid #bcb9b5;outline-offset:-1px}
.bs{height:118px}
.bs .thumb{height:32px;margin-bottom:60px}
.bas{margin-top:3px}
.bas span{margin-left:-1px}
.spc{margin-top:3px}
.scale .two{color:#0000;background:linear-gradient(90deg,#fff 8px,#3c3c3c 8px);background-clip:text;-webkit-background-clip:text}
.five{gap:20.500px;padding-left:9px;height:30px}
```
FILE: app.js
```
const el = id => document.getElementById(id);
const STEP = 16.667;

// horizontal ruler
let h = '<path d="M229 78.500h911" stroke="#4c4c4c"/>';
for (let k = -6; k < 48; k++) {
  const x = Math.round(343 + k * STEP) + 0.500;
  const major = k % 10 === 0 && k >= 0;
  h += `<path d="M${x} ${major ? 62 : k % 2 ? 74 : 71}V78" stroke="#4c4c4c"/>`;
  if (major) h += `<text x="${x + 1.500}" y="72">${k * 25}</text>`;
}
h += '<path d="M786 72h12l-6 6z" fill="#4c4c4c"/>';
el('hr').innerHTML = '<g font-size="12" fill="#4c4c4c">' + h + '</g>';

// vertical ruler
let v = '<path d="M227.500 79v608" stroke="#4c4c4c"/>';
for (let k = 0; k < 37; k++) {
  const y = Math.round(79 + k * STEP) + 0.500;
  const major = k % 10 === 0;
  v += `<path d="M${major ? 211 : k % 2 ? 223 : 220} ${y}H228" stroke="#4c4c4c"/>`;
  if (major) String(k * 25).split('').forEach((c, i) => { v += `<text x="211" y="${y + 10.500 + i * 11}">${c}</text>`; });
}
v += '<path d="M221 559v12l6-6z" fill="#4c4c4c"/>';
el('vr').innerHTML = '<g font-size="12" fill="#4c4c4c">' + v + '</g>';

// image canvas
const poly = (cx, cy, r) => Array.from({length: 32}, (_, i) => {
  const a = i * Math.PI / 16;
  return (cx + r * Math.sin(a)).toFixed(1) + ',' + (cy + r * Math.cos(a)).toFixed(1);
}).join(' ');
let c = '<path d="M343 79h683v608H343z" fill="url(#chk)"/><g fill="#fff" fill-opacity=".2" stroke="#000" stroke-opacity=".5">';
c += `<polygon points="${poly(513, 256.500, 108.500)}"/><polygon points="${poly(876.300, 245.700, 108.300)}"/></g>`;
c += '<path d="M407 453h569v181H407z" fill="#fff" fill-opacity=".2"/><path d="M407 453.500h570" stroke="#000" stroke-opacity=".3"/><path d="M407 634.500h570" stroke="#000" stroke-opacity=".5"/>';
const tone = [.4,.25,.4,.38,.18,.35,.6,.42,.08,.38,.38,.25,.2,.15,.38,.45,.38,.12,.45,.45,.3,.2,.38,.25,.38,.3,.15,.45,.55,.25,.2,.45,.45];
tone.forEach((o, i) => { c += `<path d="M${Math.round(407.300 + i * 17.770) + .5} 453V634" stroke="#000" stroke-opacity="${o}"/>`; });
c += '<g fill="none"><path d="M343.500 687V79.500H1025.500V687" stroke="#000"/><path d="M343.500 687V79.500H1025.500V687" stroke="#ff3" stroke-dasharray="4 4"/><circle cx="792" cy="565" r="6.500" stroke="#333"/><circle cx="792" cy="565" r="6.500" stroke="#ddd" stroke-dasharray="3 3"/></g>';
el('cv').innerHTML = c;

// brush previews
let seed = 7;
const rnd = () => (seed = seed * 16807 % 2147483647) / 2147483647;
const splat = (cx, cy, r, n, sx, a, o) => {
  let s = '';
  for (let i = 0; i < n; i++) {
    const t = rnd() * 6.283, d = (rnd() + rnd()) * .62 * r, w = .5 + rnd() * .9;
    const px = Math.cos(t) * d * sx, py = Math.sin(t) * d;
    s += `<rect x="${(cx + px * Math.cos(a) - py * Math.sin(a)).toFixed(1)}" y="${(cy + px * Math.sin(a) + py * Math.cos(a)).toFixed(1)}" width="${w.toFixed(1)}" height="${w.toFixed(1)}" opacity="${o}"/>`;
  }
  return s;
};
let b = '<path d="M1220 535h3v3h-3zM1310 536h30v1h-30zM1242 533h29v7h-29z"/><ellipse cx="1290.500" cy="536.500" rx="14" ry="5.500" fill="url(#mid)"/>';
b += '<circle cx="1188.500" cy="572" r="11" fill="url(#soft)"/><circle cx="1222.500" cy="571.500" r="13" fill="url(#soft)"/><circle cx="1222.500" cy="571.500" r="7" fill="url(#soft)"/><circle cx="1256.500" cy="571.500" r="13.500" fill="url(#mid)"/><circle cx="1290.500" cy="571.500" r="15.700"/><path d="M1324.500 557l3.500 9.500 10.500.5-8 6.500 2.500 10.500-8.500-6-8.500 6 2.500-10.500-8-6.500 10.500-.5z"/>';
b += '<path d="M1205.500 554.500h33v33h-33z" fill="none" stroke="#000"/>';
b += splat(1188, 605, 10, 520, 1, 0, .8) + splat(1222, 606, 7, 130, 1.6, .3, .8) + splat(1256, 605, 12, 190, .5, .3, .7) + splat(1290, 604, 10, 420, 1, 0, .35) + splat(1324, 605, 14, 560, 1, 0, .9);
b += splat(1324, 638, 12, 200, 1, 0, .9) + splat(1257, 632, 6, 20, .7, .5, .9) + '<path d="M1179 627l3 6" stroke="#888" stroke-width="2"/><circle cx="1223" cy="627" r="1"/><circle cx="1243" cy="632" r="1"/>' + splat(1290, 631, 14, 10, 1, 0, .8);
b += '<path d="M1237 548v5h-5z" fill="#6d86f5"/>';
[[550, '#6d86f5', 2], [584, '#6d86f5', 0], [618, '#f07070', 0]].forEach(([y, col, s]) => {
  for (let i = s; i < 5; i++) {
    const x = 1201 + i * 34;
    b += `<path d="M${x + 3} ${y - 2}v5h-5z" fill="${col}"/><path d="M${x - 2} ${y + .5}h5M${x + .5} ${y - 2}v5" stroke="#000"/>`;
  }
});
el('br').innerHTML = b;
```
